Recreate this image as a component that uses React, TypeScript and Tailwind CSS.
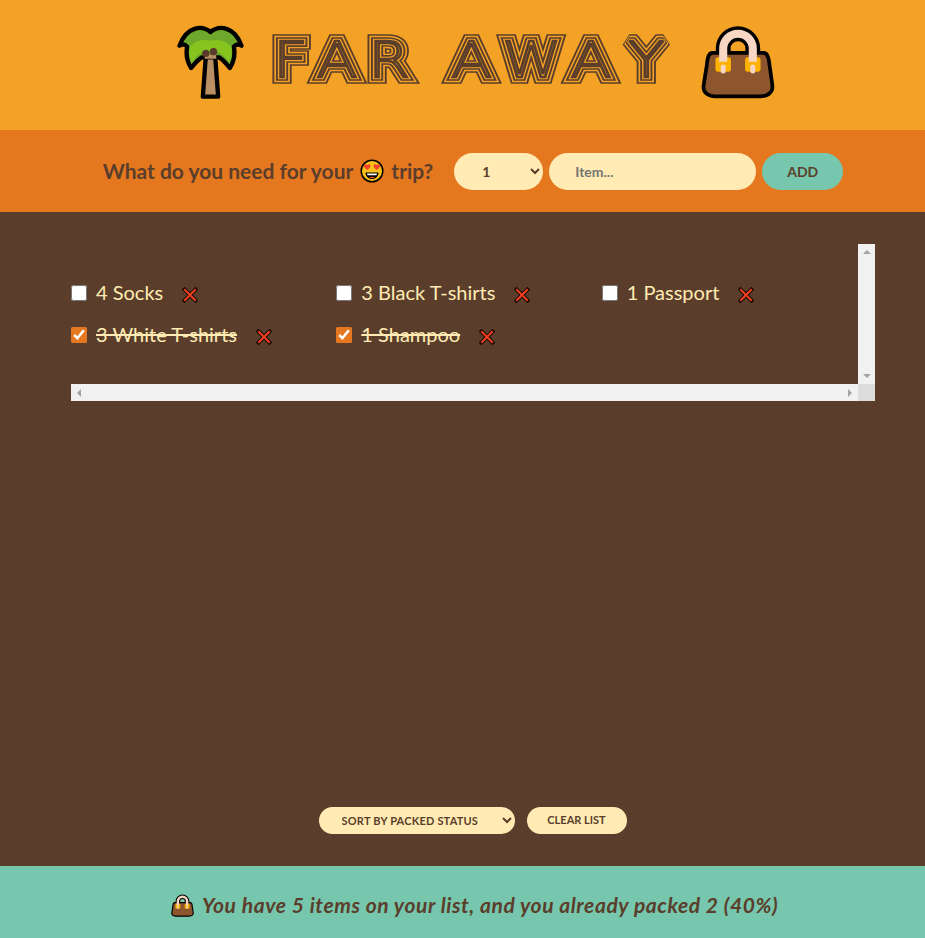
import React from 'react';

const PalmIcon = () => (
  <svg viewBox="50 45 200 225" width={67} height={75} aria-hidden="true">
    <path d="M137 125 L163 125 L173 260 L127 260 Z" fill="#b98f63" stroke="#000" strokeWidth="13" strokeLinejoin="round" />
    <path
      d="M150 66 C125 45 78 48 57 107 C66 102 74 103 80 110 C76 132 80 156 92 174 C103 160 114 148 124 142 L176 142 C186 148 197 160 208 174 C220 156 224 132 220 110 C226 103 234 102 243 107 C222 48 175 45 150 66 Z"
      fill="#6ea92b"
      stroke="#000"
      strokeWidth="13"
      strokeLinejoin="round"
    />
    <path
      d="M150 92 C125 86 100 95 88 110 C84 128 88 142 94 158 C104 142 118 128 132 124 L168 124 C182 128 196 142 206 158 C212 142 216 128 212 110 C200 95 175 86 150 92 Z"
      fill="#86c41f"
    />
    <path d="M134 132 L166 132 L168 146 L132 146 Z" fill="#b98f63" />
    <circle cx="136" cy="130" r="11" fill="#5b3a2c" />
    <circle cx="159" cy="125" r="11" fill="#5b3a2c" />
  </svg>
);

const BagIcon = ({ size = 74 }: { size?: number }) => (
  <svg viewBox="695 47 218 220" width={size} height={size} aria-hidden="true">
    <path d="M760 150 L760 117 A44 44 0 0 1 848 117 L848 150" fill="none" stroke="#000" strokeWidth="44" />
    <path
      d="M728 130 L880 130 C893 130 896 148 898 168 L906 225 C909 245 895 259 870 259 L737 259 C713 259 698 245 702 225 L711 168 C713 148 715 130 728 130 Z"
      fill="#8e562e"
      stroke="#000"
      strokeWidth="11"
      strokeLinejoin="round"
    />
    <rect x="737" y="143" width="46" height="43" rx="8" fill="#ffb300" />
    <rect x="825" y="143" width="46" height="43" rx="8" fill="#ffb300" />
    <path d="M760 156 L760 117 A44 44 0 0 1 848 117 L848 156" fill="none" stroke="#f7d7c4" strokeWidth="24" />
    <path d="M760 172 L760 184 M848 172 L848 184" stroke="#f7d7c4" strokeWidth="15" strokeLinecap="round" />
  </svg>
);

const HeartEyes = () => (
  <svg viewBox="0 0 24 24" width={24} height={24} aria-hidden="true" className="shrink-0">
    <circle cx="12" cy="12" r="10.8" fill="#fcc21b" stroke="#000" strokeWidth="1.5" />
    <path d="M7.3 11 C5 9.2 3.6 8 4 6.4 C4.4 5 6.2 4.8 7.2 6 C8.2 4.8 10.2 5 10.5 6.5 C10.8 8 9.4 9.4 7.3 11 Z" fill="#f2432b" />
    <path d="M16.7 11 C14.6 9.4 13.2 8 13.5 6.5 C13.8 5 15.8 4.8 16.8 6 C17.8 4.8 19.6 5 20 6.4 C20.4 8 19 9.2 16.7 11 Z" fill="#f2432b" />
    <path d="M5.5 13.5 L18.5 13.5 C18.5 17.5 15.5 20 12 20 C8.5 20 5.5 17.5 5.5 13.5 Z" fill="#000" />
    <path d="M7 14.5 L17 14.5 L16.5 16.2 L7.5 16.2 Z" fill="#fff" />
    <path d="M9 18.5 C10.5 17.5 13.5 17.5 15 18.5 C13.5 19.5 10.5 19.5 9 18.5 Z" fill="#f2432b" />
  </svg>
);

const CrossIcon = () => (
  <svg viewBox="0 0 16 16" width={16} height={16} aria-hidden="true">
    <path d="M2.5 2.5 L13.5 13.5 M13.5 2.5 L2.5 13.5" stroke="#1a0a05" strokeWidth="4" strokeLinecap="square" />
    <path d="M3 3 L13 13 M13 3 L3 13" stroke="#f4401e" strokeWidth="2" strokeLinecap="square" />
  </svg>
);

// concentric strokes stand in for the Monoton display face
const titleLayers = [
  { width: 15, color: '#5a3e2b' },
  { width: 11.5, color: '#f4a226' },
  { width: 8.5, color: '#5a3e2b' },
  { width: 5, color: '#f4a226' },
  { width: 2.5, color: '#5a3e2b' },
];

const Title = () => (
  <h1 aria-label="Far Away">
    <svg viewBox="0 0 398 60" width={398} height={60} className="block overflow-visible" aria-hidden="true">
      {titleLayers.map((l) => (
        <text
          key={l.width}
          transform="scale(1.2 1)"
          x="1.8 38 81 120 150 192.7 249.6 297.5"
          y="45"
          fill="none"
          stroke={l.color}
          strokeWidth={l.width}
          strokeLinejoin="miter"
          strokeMiterlimit={2}
          vectorEffect="non-scaling-stroke"
          className="font-['DejaVu_Sans'] text-[50px] font-extralight"
        >
          FAR AWAY
        </text>
      ))}
    </svg>
  </h1>
);

const items = [
  { id: 1, label: '4 Socks', packed: false },
  { id: 2, label: '3 Black T-shirts', packed: false },
  { id: 3, label: '1 Passport', packed: false },
  { id: 4, label: '3 White T-shirts', packed: true },
  { id: 5, label: '1 Shampoo', packed: true },
];

const Arrow = ({ dir }: { dir: 'up' | 'down' | 'left' | 'right' }) => {
  const points = {
    up: '4,0 8,4 0,4',
    down: '0,0 8,0 4,4',
    left: '4,0 4,8 0,4',
    right: '0,0 4,4 0,8',
  }[dir];
  const horizontal = dir === 'left' || dir === 'right';
  return (
    <svg width={horizontal ? 4 : 8} height={horizontal ? 8 : 4} aria-hidden="true">
      <polygon points={points} fill="#a3a3a3" />
    </svg>
  );
};

export default function App() {
  return (
    <div className="grid h-[938px] grid-rows-[130px_82px_1fr_72px] font-['Lato','Noto_Sans',sans-serif] text-[#5a3e2b]">
      <header className="flex items-center justify-center bg-[#f4a226] pb-[6px] pl-[26px]">
        <PalmIcon />
        <div className="ml-[27px] mr-[32px]">
          <Title />
        </div>
        <BagIcon />
      </header>

      <form className="flex items-center justify-center gap-[6px] bg-[#e5771f] pl-[21px]">
        <h3 className="mr-[15px] flex items-center gap-[7px] text-[21px] font-bold">
          What do you need for your <HeartEyes /> trip?
        </h3>
        <select className="h-[37px] w-[89px] rounded-full bg-[#ffebb3] pl-[24px] text-[14px] font-bold">
          <option>1</option>
        </select>
        <input
          placeholder="Item..."
          className="h-[37px] w-[207px] rounded-full bg-[#ffebb3] px-[26px] text-[14px] font-bold placeholder:text-[#757575]"
        />
        <button type="button" className="h-[37px] w-[81px] rounded-full bg-[#76c7ad] text-[14px] font-bold">
          ADD
        </button>
      </form>

      <main className="flex flex-col bg-[#5a3e2b] px-[50px] pb-[32px] pt-[32px]">
        <div className="ml-[21px] grid h-[157px] w-[804px] grid-cols-[787px_17px] grid-rows-[140px_17px]">
          <ul className="grid grid-cols-3 content-start gap-x-[9px] gap-y-[10px] pt-[33px]">
            {items.map((item) => (
              <li key={item.id} className="flex h-[32px] items-center gap-[9px] text-[#ffebb3]">
                <input
                  type="checkbox"
                  defaultChecked={item.packed}
                  className="h-4 w-4 shrink-0 accent-[#e5771f]"
                />
                <span className={`-mt-[2px] text-[20px] whitespace-nowrap ${item.packed ? 'line-through' : ''}`}>
                  {item.label}
                </span>
                <button type="button" className="ml-[10px] mt-[3px]">
                  <CrossIcon />
                </button>
              </li>
            ))}
          </ul>
          <div className="flex flex-col items-center justify-between bg-[#f1f1f1] py-[6px]">
            <Arrow dir="up" />
            <Arrow dir="down" />
          </div>
          <div className="flex items-center justify-between bg-[#f1f1f1] px-[6px]">
            <Arrow dir="left" />
            <Arrow dir="right" />
          </div>
          <div className="bg-[#dcdcdc]" />
        </div>

        <div className="mt-auto flex justify-center gap-[12px] pl-[20px]">
          <select className="h-[27px] w-[196px] rounded-full bg-[#ffebb3] pl-[19px] text-[11px] font-bold tracking-[0.2px] uppercase">
            <option>SORT BY PACKED STATUS</option>
          </select>
          <button type="button" className="h-[27px] w-[100px] rounded-full bg-[#ffebb3] text-[11px] font-bold uppercase">
            Clear list
          </button>
        </div>
      </main>

      <footer className="flex items-center justify-center gap-[8px] bg-[#76c7ad] pl-[24px] pt-[6px] text-[21px] font-bold tracking-[0.57px]">
        <BagIcon size={23} />
        <em>You have 5 items on your list, and you already packed 2 (40%)</em>
      </footer>
    </div>
  );
}
